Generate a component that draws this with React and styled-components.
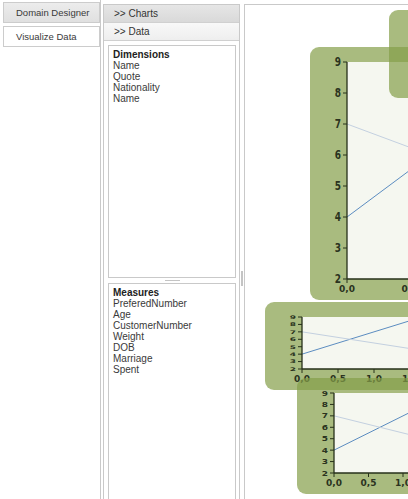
import React from "react";
import styled, { createGlobalStyle } from "styled-components";

const GlobalStyle = createGlobalStyle`
  html, body {
    margin: 0;
    padding: 0;
    background: #ffffff;
    overflow: hidden;
  }
  body {
    font-family: "Liberation Sans", Arial, sans-serif;
    color: #333333;
  }
`;

const Page = styled.div`
  display: flex;
  align-items: flex-start;
  height: 499px;
  overflow: hidden;
`;

const SideNav = styled.div`
  flex: none;
  width: 101px;
  height: 100%;
  box-sizing: border-box;
  padding: 2px 0 0 3px;
  border-right: 1px solid #c9c9c9;
`;

const NavTab = styled.div`
  width: 97px;
  height: 21px;
  box-sizing: border-box;
  margin-bottom: 3px;
  padding-left: 12px;
  border: 1px solid #cccccc;
  background: ${(p) => (p.$active ? "linear-gradient(#ececec, #e0e0e0)" : "#ffffff")};
  font-size: 9.5px;
  line-height: 19px;
  color: #3a3a3a;
  white-space: nowrap;
`;

const DataPanel = styled.div`
  flex: none;
  width: 137px;
  height: 530px;
  box-sizing: border-box;
  margin: 4px 0 0 2px;
  border: 1px solid #c9c9c9;
  display: flex;
  flex-direction: column;
`;

const PanelHeader = styled.div`
  height: 18px;
  box-sizing: border-box;
  padding-left: 10px;
  border-bottom: 1px solid #d0d0d0;
  background: ${(p) => (p.$dark ? "linear-gradient(#e6e6e6, #d9d9d9)" : "linear-gradient(#f8f8f8, #eeeeee)")};
  font-size: 10px;
  line-height: 17px;
  color: #333333;
`;

const FieldArea = styled.div`
  flex: 1;
  display: flex;
  flex-direction: column;
  padding: 4px 3px 0 4px;
`;

const FieldBox = styled.div`
  height: ${(p) => p.$h}px;
  flex: none;
  box-sizing: border-box;
  border: 1px solid #c9c9c9;
  padding: 3px 4px;
  font-size: 10px;
  line-height: 11px;
  color: #3a3a3a;
`;

const FieldTitle = styled.div`
  font-weight: bold;
  color: #222222;
`;

const HSplitter = styled.div`
  height: 5px;
  display: flex;
  align-items: center;
  justify-content: center;
`;

const Grip = styled.div`
  width: ${(p) => (p.$vertical ? 2 : 15)}px;
  height: ${(p) => (p.$vertical ? 15 : 1)}px;
  background: #c4c4c4;
`;

const VSplitter = styled.div`
  flex: none;
  width: 4px;
  height: 100%;
  display: flex;
  justify-content: center;
  padding-top: 271px;
  box-sizing: border-box;
`;

const Canvas = styled.div`
  flex: none;
  position: relative;
  width: 300px;
  height: 530px;
  margin-top: 4px;
  box-sizing: border-box;
  border: 1px solid #c9c9c9;
  background: #ffffff;
  overflow: hidden;
`;

const ChartFrame = styled.div`
  position: absolute;
  left: ${(p) => p.$x}px;
  top: ${(p) => p.$y}px;
  width: ${(p) => p.$w}px;
  height: ${(p) => p.$h}px;
  border-radius: 9px;
  background: rgba(132, 158, 72, 0.7);
`;

const ChartSvg = styled.svg`
  display: block;
  overflow: visible;
`;

const TickLabel = styled.text`
  font-family: "DejaVu Sans", Verdana, sans-serif;
  font-size: 9px;
  font-weight: bold;
  fill: #2b3320;
`;

const dimensions = ["Name", "Quote", "Nationality", "Name"];
const measures = ["PreferedNumber", "Age", "CustomerNumber", "Weight", "DOB", "Marriage", "Spent"];

const series = [
  { color: "#5b8cc0", from: 4, slope: 3 },
  { color: "#c3d0e0", from: 7, slope: -1.5 },
];

const charts = [
  { id: "c1", x: 65, y: 42, w: 260, h: 253, xs: 125, sy: 1.35 },
  { id: "c0", x: 144, y: 5, w: 170, h: 88, xs: 70, sy: 0.6, hidden: true },
  { id: "c2", x: 20, y: 297, w: 200, h: 88, xs: 72, sy: 0.55 },
  { id: "c3", x: 52, y: 373, w: 200, h: 116, xs: 69, sy: 0.8 },
];

function Chart({ x, y, w, h, xs, sy }) {
  const left = 37;
  const top = 15;
  const bottom = h - 21;
  const right = w - 8;
  const yOf = (v) => top + ((9 - v) / 7) * (bottom - top);
  const span = (right - left) / xs;
  const yTicks = [2, 3, 4, 5, 6, 7, 8, 9];
  const xTicks = [];
  for (let v = 0; v <= span; v += 0.5) xTicks.push(v);

  return (
    <ChartFrame $x={x} $y={y} $w={w} $h={h}>
      <ChartSvg width={w} height={h}>
        <defs>
          <clipPath id={`plot-${x}-${y}`}>
            <rect x={left} y={top} width={right - left} height={bottom - top} />
          </clipPath>
        </defs>
        <rect x={left} y={top} width={right - left} height={bottom - top} fill="#f5f7f0" />
        <g clipPath={`url(#plot-${x}-${y})`}>
          {series.map((s) => (
            <line
              key={s.color}
              x1={left}
              y1={yOf(s.from)}
              x2={right}
              y2={yOf(s.from + s.slope * span)}
              stroke={s.color}
              strokeWidth="1"
            />
          ))}
        </g>
        <line x1={left} y1={top} x2={left} y2={bottom} stroke="#26301a" strokeWidth="1.3" />
        <line x1={left} y1={bottom} x2={right} y2={bottom} stroke="#26301a" strokeWidth="1.3" />
        {yTicks.map((v) => (
          <g key={v}>
            <line x1={left - 4} y1={yOf(v)} x2={left} y2={yOf(v)} stroke="#26301a" strokeWidth="1" />
            <TickLabel
              transform={`translate(${left - 6} ${yOf(v)}) scale(1 ${sy})`}
              textAnchor="end"
              dy="0.36em"
            >
              {v}
            </TickLabel>
          </g>
        ))}
        {xTicks.map((v) => (
          <g key={v}>
            <line x1={left + v * xs} y1={bottom} x2={left + v * xs} y2={bottom + 4} stroke="#26301a" strokeWidth="1" />
            <TickLabel x={left + v * xs} y={bottom + 13} textAnchor="middle">
              {v.toFixed(1).replace(".", ",")}
            </TickLabel>
          </g>
        ))}
      </ChartSvg>
    </ChartFrame>
  );
}

export default function App() {
  return (
    <>
      <GlobalStyle />
      <Page>
        <SideNav>
          <NavTab $active>Domain Designer</NavTab>
          <NavTab>Visualize Data</NavTab>
        </SideNav>
        <DataPanel>
          <PanelHeader $dark>&gt;&gt; Charts</PanelHeader>
          <PanelHeader>&gt;&gt; Data</PanelHeader>
          <FieldArea>
            <FieldBox $h={233}>
              <FieldTitle>Dimensions</FieldTitle>
              {dimensions.map((d, i) => (
                <div key={i}>{d}</div>
              ))}
            </FieldBox>
            <HSplitter>
              <Grip />
            </HSplitter>
            <FieldBox $h={260}>
              <FieldTitle>Measures</FieldTitle>
              {measures.map((m) => (
                <div key={m}>{m}</div>
              ))}
            </FieldBox>
          </FieldArea>
        </DataPanel>
        <VSplitter>
          <Grip $vertical />
        </VSplitter>
        <Canvas>
          {charts.map((c) => (
            <Chart key={c.id} {...c} />
          ))}
        </Canvas>
      </Page>
    </>
  );
}
